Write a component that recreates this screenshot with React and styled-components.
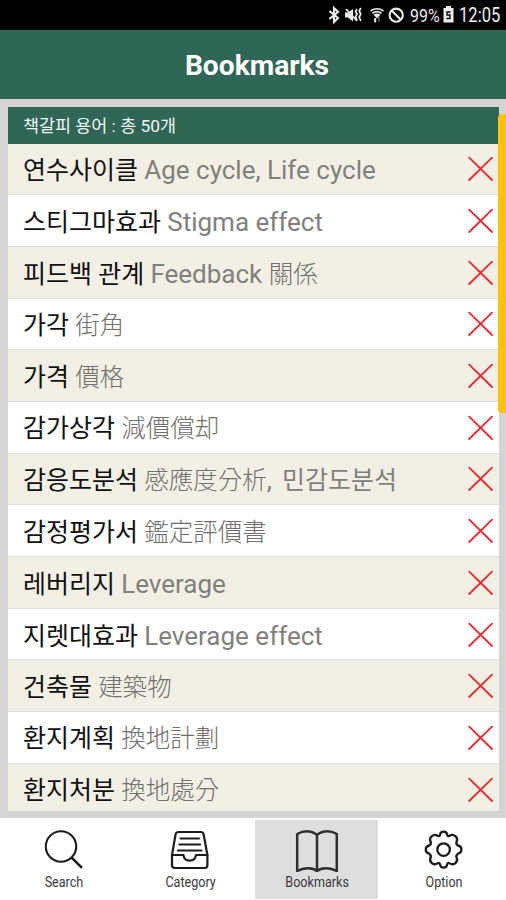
import { useState } from "react"
import styled, { createGlobalStyle } from "styled-components"

const termos = [
    { nome: "연수사이클", original: "Age cycle, Life cycle" },
    { nome: "스티그마효과", original: "Stigma effect" },
    { nome: "피드백 관계", original: "Feedback 關係" },
    { nome: "가각", original: "街角" },
    { nome: "가격", original: "價格" },
    { nome: "감가상각", original: "減價償却" },
    { nome: "감응도분석", original: "感應度分析, 민감도분석" },
    { nome: "감정평가서", original: "鑑定評價書" },
    { nome: "레버리지", original: "Leverage" },
    { nome: "지렛대효과", original: "Leverage effect" },
    { nome: "건축물", original: "建築物" },
    { nome: "환지계획", original: "換地計劃" },
    { nome: "환지처분", original: "換地處分" },
]

const abas = [
    { nome: "Search", Icone: IconeBusca },
    { nome: "Category", Icone: IconeCategoria },
    { nome: "Bookmarks", Icone: IconeLivro },
    { nome: "Option", Icone: IconeOpcao },
]

export default function App() {
    const [abaAtual, setAbaAtual] = useState("Bookmarks")
    const [lista, setLista] = useState(termos)

    function remover(nome) {
        setLista(lista.filter(termo => termo.nome !== nome))
    }

    return (
        <Tela>
            <GlobalStyle />
            <BarraStatus>
                <IconesStatus />
                <Bateria>99%</Bateria>
                <IconeBateria />
                <Hora>12:05</Hora>
            </BarraStatus>
            <Cabecalho>Bookmarks</Cabecalho>
            <Conteudo>
                <Painel>
                    <Contagem>책갈피 용어 : 총 50개</Contagem>
                    <Lista>
                        {lista.map((termo, i) => (
                            <Item key={termo.nome} $par={i % 2 === 0}>
                                <Texto>
                                    <Nome>{termo.nome}</Nome> <Original texto={termo.original} />
                                </Texto>
                                <BotaoRemover onClick={() => remover(termo.nome)}>
                                    <IconeX />
                                </BotaoRemover>
                            </Item>
                        ))}
                    </Lista>
                </Painel>
                <Rolagem />
            </Conteudo>
            <Menu>
                {abas.map(({ nome, Icone }) => (
                    <Aba key={nome} $ativa={nome === abaAtual} onClick={() => setAbaAtual(nome)}>
                        <Icone />
                        <Rotulo>{nome}</Rotulo>
                    </Aba>
                ))}
            </Menu>
        </Tela>
    )
}

// separa o texto por escrita: hanja, latim e hangul
function Original({ texto }) {
    const partes = texto.match(/[\u4e00-\u9fff]+|[A-Za-z, ]+|[\uac00-\ud7a3]+/g)

    return (
        <OriginalSpan>
            {partes.map((parte, i) => {
                if (/[\u4e00-\u9fff]/.test(parte)) return <Hanja key={i}>{parte}</Hanja>
                if (/[A-Za-z]/.test(parte)) return <Latim key={i}>{parte}</Latim>
                if (parte === ", ") return <Virgula key={i}>{parte}</Virgula>
                return parte
            })}
        </OriginalSpan>
    )
}

function IconesStatus() {
    return (
        <svg width="79" height="20" viewBox="0 0 79 20" fill="none" stroke="#ededed" strokeWidth="2.1">
            <path d="M0.5 6 L9 13 L5 17 V3 L9 7 L0.5 14" />
            <path d="M16 7.5 H19 L24 4 V16.5 L19 12.5 H16 Z" fill="#ededed" stroke="none" />
            <path d="M17 4 L28 16" strokeWidth="1.8" />
            <path d="M28 4 L26.5 6.5 L28 9 L26.5 12 L28 15 M31.8 3 L30.2 6 L31.8 9 L30.2 12 L31.8 16" strokeWidth="1.7" />
            <path d="M41.5 6 Q48 1.5 54.5 6 M43.5 8.3 Q48 5 52.5 8.3" strokeWidth="1.7" />
            <path d="M44.5 9.7 Q48 7.5 51.5 9.7 L48 13.5 Z" fill="#ededed" stroke="none" />
            <path d="M46.2 13 V17.5" strokeWidth="2" />
            <path d="M50 12 V16.5" strokeWidth="1.3" stroke="#8a8a8a" />
            <circle cx="67.2" cy="10.2" r="6.6" />
            <path d="M62.6 5.6 L71.8 14.8" />
        </svg>
    )
}

function IconeBateria() {
    return (
        <svg width="11" height="17" viewBox="0 0 11 17">
            <path d="M3 0 H8 V2 H10.5 V16.5 H0.5 V2 H3 Z" fill="#ededed" />
            <path d="M7.5 6 H4 V9 H7 V12.5 H3.5" fill="none" stroke="#000" strokeWidth="1.3" />
        </svg>
    )
}

function IconeX() {
    return (
        <svg width="25" height="25" viewBox="0 0 25 25" stroke="#f2262a" strokeWidth="1.8" strokeLinecap="round">
            <path d="M1.2 1.6 L24 24 M24 1.6 L1.2 24" />
        </svg>
    )
}

function IconeBusca() {
    return (
        <svg width="44" height="44" viewBox="0 0 44 44" fill="none" stroke="#1c1c1c" strokeWidth="2.1">
            <circle cx="19" cy="18.5" r="15.2" />
            <path d="M29.5 29.5 L40 39.8" strokeWidth="2.5" />
        </svg>
    )
}

function IconeCategoria() {
    return (
        <svg width="44" height="44" viewBox="0 0 44 44" fill="none" stroke="#1c1c1c" strokeWidth="2.2" strokeLinejoin="round" strokeLinecap="round">
            <path d="M4 27 L7.6 6.3 Q8.2 4 10.6 4 H32.6 Q35 4 35.6 6.3 L39.4 27" />
            <path d="M4 27 H15.5 Q16 32.6 21.7 32.6 Q27.4 32.6 27.9 27 H39.4 V37.3 Q39.4 40 36.6 40 H6.8 Q4 40 4 37.3 Z" />
            <path d="M12.5 10.5 H31 M11.5 16.5 H32 M10 22.5 H33.5" />
        </svg>
    )
}

function IconeLivro() {
    return (
        <svg width="44" height="44" viewBox="0 0 44 44" fill="none" stroke="#2d2d2d" strokeWidth="2.5" strokeLinejoin="round">
            <path d="M22 7 C18 2.5 9 2.2 2.2 6 V43 C9 39 18 39.5 22 43 C26 39.5 35 39 41.8 43 V6 C35 2.2 26 2.5 22 7 V43" />
        </svg>
    )
}

function IconeOpcao() {
    return (
        <svg width="44" height="44" viewBox="0 0 44 44" fill="none" stroke="#1c1c1c" strokeWidth="2.3" strokeLinejoin="round">
            <path transform="translate(-0.4 -0.4)" d="M18.4 7.2 C19 2.9 25 2.9 25.6 7.2 Q26 9.4 28.2 8.2 C31.7 5.7 37.3 9.7 35 14 Q34 16.3 36.4 17.9 C41 18.8 41 25.2 36.4 26.1 Q34 27.7 35 30 C37.3 34.3 31.7 38.3 28.2 35.8 Q26 34.6 25.6 36.8 C25 41.1 19 41.1 18.4 36.8 Q18 34.6 15.8 35.8 C12.3 38.3 6.7 34.3 9 30 Q10 27.7 7.6 26.1 C3 25.2 3 18.8 7.6 17.9 Q10 16.3 9 14 C6.7 9.7 12.3 5.7 15.8 8.2 Q18 9.4 18.4 7.2 Z" />
            <circle cx="21.6" cy="21.6" r="6.3" />
        </svg>
    )
}

const GlobalStyle = createGlobalStyle`
body {
    margin: 0;
    font-family: Roboto, "Noto Sans CJK KR", sans-serif;
}
* {
    box-sizing: border-box;
}
button {
    font-family: inherit;
    border: none;
    padding: 0;
    background: none;
}
`

const Tela = styled.div`
display: flex;
flex-direction: column;
width: 506px;
height: 900px;
overflow: hidden;
background-color: white;
`

const BarraStatus = styled.div`
display: flex;
align-items: center;
justify-content: flex-end;
height: 29.5px;
flex-shrink: 0;
padding-right: 6px;
background-color: black;
color: #ededed;
`

const Bateria = styled.span`
font-size: 19px;
width: 33px;
margin: 1px 0 0 2px;
display: inline-block;
transform: scaleX(0.84);
transform-origin: left;
`

const Hora = styled.span`
font-size: 19.5px;
width: 41px;
margin: 1px 0 0 5px;
transform: scaleX(0.85);
transform-origin: left;
`

const Cabecalho = styled.header`
display: flex;
align-items: center;
justify-content: center;
height: 69px;
flex-shrink: 0;
padding: 3px 0 0 8px;
background-color: #2f6656;
color: white;
font-size: 28.2px;
font-weight: 700;
`

const Conteudo = styled.main`
position: relative;
height: 719.5px;
flex-shrink: 0;
padding: 8px 7px 7px 8px;
background-color: #d4d4d4;
`

const Painel = styled.section`
display: flex;
flex-direction: column;
height: 100%;
overflow: hidden;
`

const Contagem = styled.div`
display: flex;
align-items: center;
height: 37px;
flex-shrink: 0;
padding: 0 0 1px 15px;
background-color: #2f6656;
color: #f2f5f4;
font-size: 17.4px;
`

const Lista = styled.ul`
margin: 0;
padding: 0;
list-style-type: none;
`

const Item = styled.li`
display: flex;
align-items: center;
justify-content: space-between;
height: 51.7px;
padding: 0 6px 0 15px;
border-bottom: 1px solid #dedede;
background-color: ${props => props.$par ? '#f2f0e4' : 'white'};
`

const Texto = styled.p`
margin: 0;
padding-top: 4px;
font-size: 25px;
line-height: 36px;
white-space: nowrap;
`

const Nome = styled.span`
color: #111111;
`

const OriginalSpan = styled.span`
color: #80807d;
`

const Latim = styled.span`
font-size: 26px;
`

const Hanja = styled.span`
color: #70706e;
font-size: 24.5px;
font-weight: 300;
`

const Virgula = styled.span`
font-size: 26px;
letter-spacing: 1.8px;
`

const BotaoRemover = styled.button`
display: flex;
`

const Rolagem = styled.div`
position: absolute;
top: 15.5px;
right: 0;
width: 8px;
height: 299px;
border-radius: 4px 0 0 4px;
background-color: #ffc107;
`

const Menu = styled.nav`
display: flex;
flex: 1;
gap: 3.6px;
padding: 2px 0 1px 2.3px;
background-color: white;
`

const Aba = styled.button`
display: flex;
flex-direction: column;
align-items: center;
width: 123px;
flex-shrink: 0;
padding-top: 8px;
background-color: ${props => props.$ativa ? '#dedede' : 'white'};
`

const Rotulo = styled.span`
margin-top: 2px;
font-size: 14.3px;
line-height: 16px;
color: #3a3a3a;
transform: scaleX(0.88);
`
